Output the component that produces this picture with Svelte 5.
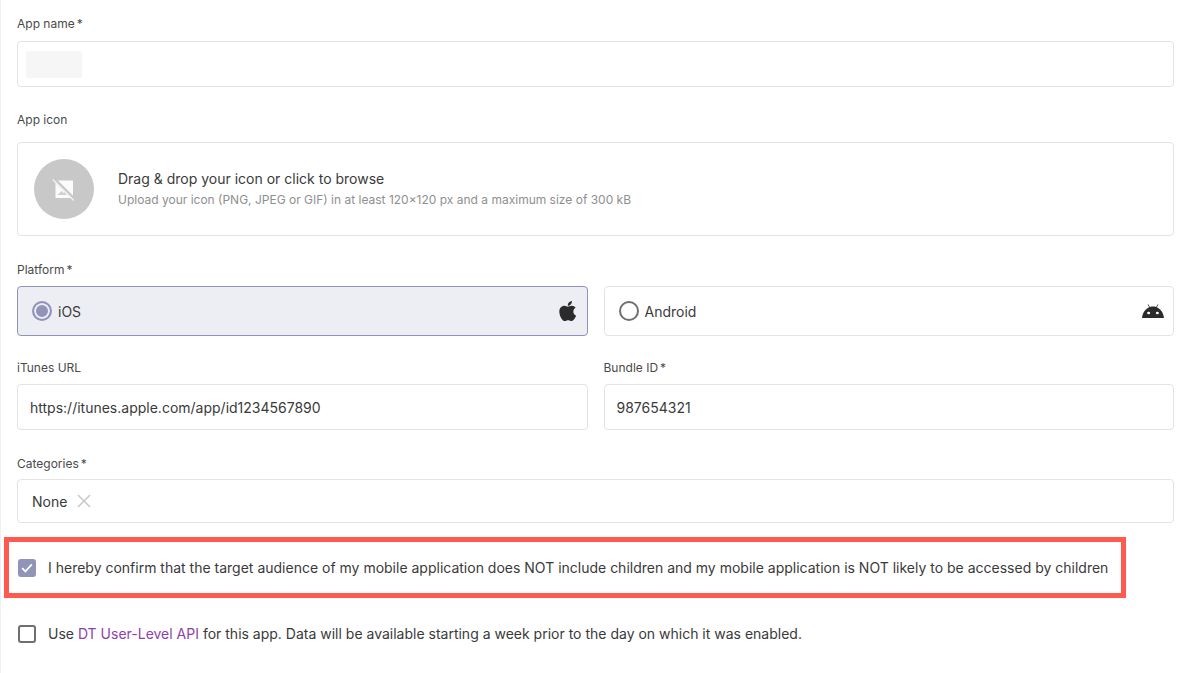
<script>
  let appName = '';
  let itunesUrl = 'https://itunes.apple.com/app/id1234567890';
  let bundleId = '987654321';
</script>

<div class="page">
  <div class="field name-field">
    <label for="app-name">App name<span class="req">*</span></label>
    <div class="input masked">
      <span class="blur"></span>
      <input id="app-name" bind:value={appName} />
    </div>
  </div>

  <div class="field icon-field">
    <span class="label">App icon</span>
    <div class="dropzone">
      <div class="avatar">
        <svg width="24" height="24" viewBox="0 0 24 24">
          <path d="M3.5 3.5h17.5v17.5H3.5z" fill="#fff" opacity="0.92" />
          <path d="M5.5 18l4-4 2 2 1-1 2 3z" fill="#cfcfcf" />
          <path d="M1.5 1.5l21 21" stroke="#c8c8c8" stroke-width="3.2" />
          <path d="M0.8 2.5l21 21" stroke="#f4f4f4" stroke-width="1.2" />
        </svg>
      </div>
      <div class="drop-text">
        <div class="drop-title">Drag &amp; drop your icon or click to browse</div>
        <div class="drop-hint">Upload your icon (PNG, JPEG or GIF) in at least 120×120 px and a maximum size of 300 kB</div>
      </div>
    </div>
  </div>

  <div class="field platform-field">
    <span class="label">Platform<span class="req">*</span></span>
    <div class="two">
      <div class="radio-card selected">
        <span class="radio on"></span>
        <span>iOS</span>
        <svg class="platform-icon" width="17" height="20" viewBox="4 32 366 448">
          <path fill="#2b2b2b" d="M318.7 268.7c-.2-36.7 16.4-64.4 50-84.8-18.8-26.9-47.2-41.7-84.7-44.6-35.5-2.8-74.3 20.7-88.5 20.7-15 0-49.4-19.7-76.4-19.7C63.3 141.2 4 184.8 4 273.5q0 39.3 14.4 81.2c12.8 36.7 59 126.7 107.2 125.2 25.2-.6 43-17.9 75.8-17.9 31.8 0 48.3 17.9 76.4 17.9 48.6-.7 90.4-82.5 102.6-119.3-65.2-30.7-61.7-90-61.7-91.9zm-56.6-164.2c27.3-32.4 24.8-61.9 24-72.5-24.1 1.4-52 16.4-67.9 34.9-17.5 19.8-27.8 44.3-25.6 71.9 26.1 2 49.9-11.4 69.5-34.3z" />
        </svg>
      </div>
      <div class="radio-card android">
        <span class="radio"></span>
        <span>Android</span>
        <svg class="platform-icon" width="22" height="14" viewBox="0 0 22 14">
          <path fill="#2b2b2b" d="M0 14C.5 8.8 3.4 4.8 7.2 3.2L5.6.6 6.2.2 7.9 2.9C9.1 2.5 10.1 2.4 11 2.4s1.9.1 3.1.5L15.8.2l.6.4-1.6 2.6C18.6 4.8 21.5 8.8 22 14z" />
          <ellipse cx="6.6" cy="9" rx="1.5" ry="1.2" fill="#fff" />
          <ellipse cx="15.4" cy="9" rx="1.5" ry="1.2" fill="#fff" />
        </svg>
      </div>
    </div>
  </div>

  <div class="two urls">
    <div class="field">
      <label for="itunes">iTunes URL</label>
      <div class="input"><input id="itunes" bind:value={itunesUrl} /></div>
    </div>
    <div class="field">
      <label for="bundle">Bundle ID<span class="req">*</span></label>
      <div class="input"><input id="bundle" bind:value={bundleId} /></div>
    </div>
  </div>

  <div class="field categories">
    <span class="label">Categories<span class="req">*</span></span>
    <div class="tags">
      <span>None</span>
      <svg width="14" height="14" viewBox="0 0 14 14">
        <path d="M1 1l12 12M13 1L1 13" stroke="#c9c9c9" stroke-width="1.6" fill="none" />
      </svg>
    </div>
  </div>

  <div class="check-row confirm">
    <span class="box checked">
      <svg width="12" height="10" viewBox="0 0 12 10">
        <path d="M1.2 5.2l3.2 3.2 6.4-7" stroke="#fff" stroke-width="1.8" fill="none" />
      </svg>
    </span>
    <span>I hereby confirm that the target audience of my mobile application does NOT include children and my mobile application is NOT likely to be accessed by children</span>
    <div class="highlight"></div>
  </div>

  <div class="check-row api">
    <span class="box"></span>
    <span>Use <a href="#api">DT User-Level API</a> for this app. Data will be available starting a week prior to the day on which it was enabled.</span>
  </div>
</div>

<style>
  :global(body) {
    background: #fff;
  }

  .page {
    box-sizing: border-box;
    width: 1184px;
    height: 673px;
    padding: 16px 10px 0 16px;
    border-left: 1px solid #f0f0f0;
    overflow: hidden;
    font-family: Inter, "Liberation Sans", sans-serif;
    font-size: 14px;
    color: #3a3a3a;
    position: relative;
  }

  .field {
    display: flex;
    flex-direction: column;
  }

  label, .label {
    font-size: 12px;
    line-height: 15px;
    color: #4a4a4a;
    margin-bottom: 10px;
  }

  .req {
    margin-left: 2px;
  }

  .input, .dropzone, .tags, .radio-card {
    box-sizing: border-box;
    border: 1px solid #e3e3e3;
    border-radius: 4px;
    background: #fff;
  }

  .input {
    height: 46px;
    display: flex;
    align-items: center;
    padding: 0 12px;
  }

  .input input {
    flex: 1;
    border: none;
    outline: none;
    padding: 0;
    font: inherit;
    color: inherit;
    background: transparent;
    min-width: 0;
  }

  .masked {
    position: relative;
  }

  .blur {
    position: absolute;
    left: 8px;
    top: 9px;
    width: 56px;
    height: 27px;
    background: #f6f6f6;
    border-radius: 2px;
  }

  .icon-field {
    margin-top: 25px;
  }

  .icon-field .label {
    margin-bottom: 15px;
  }

  .dropzone {
    height: 94px;
    display: flex;
    align-items: center;
    padding: 0 16px;
    gap: 24px;
  }

  .avatar {
    width: 60px;
    height: 60px;
    border-radius: 50%;
    background: #c8c8c8;
    display: flex;
    align-items: center;
    justify-content: center;
  }

  .drop-title {
    font-size: 14px;
    line-height: 18px;
  }

  .drop-hint {
    font-size: 12px;
    line-height: 16px;
    margin-top: 4px;
    color: #8f8f8f;
  }

  .platform-field {
    margin-top: 26px;
  }

  .platform-field .label {
    margin-bottom: 9px;
  }

  .two {
    display: grid;
    grid-template-columns: 1fr 1fr;
    gap: 16px;
  }

  .radio-card {
    height: 50px;
    display: flex;
    align-items: center;
    gap: 6px;
    padding: 0 11px 0 14px;
  }

  .radio-card.android {
    padding-right: 9px;
  }

  .radio-card.selected {
    background: #edeef4;
    border-color: #8e91b8;
  }

  .radio {
    box-sizing: border-box;
    width: 20px;
    height: 20px;
    border-radius: 50%;
    border: 2px solid #6f6f6f;
    background: #fff;
  }

  .radio.on {
    border-color: #9194b8;
    background: #9194b8;
    box-shadow: inset 0 0 0 2px #edeef4;
  }

  .platform-icon {
    margin-left: auto;
  }

  .urls {
    margin-top: 24px;
  }

  .urls label {
    margin-bottom: 9px;
  }

  .categories {
    margin-top: 26px;
  }

  .categories .label {
    margin-bottom: 8px;
  }

  .tags {
    height: 44px;
    display: flex;
    align-items: center;
    gap: 10px;
    padding: 0 14px;
  }

  .check-row {
    display: flex;
    align-items: center;
    gap: 12px;
    line-height: 20px;
    font-size: 14px;
    padding-left: 1px;
  }

  .confirm {
    margin-top: 35px;
    position: relative;
  }

  .api {
    margin-top: 46px;
  }

  .box {
    box-sizing: border-box;
    width: 18px;
    height: 18px;
    flex: none;
    border: 2px solid #6f6f6f;
    border-radius: 3px;
    background: #fff;
    display: flex;
    align-items: center;
    justify-content: center;
  }

  .box.checked {
    border-color: #9194b8;
    background: #9194b8;
  }

  a {
    color: #8e3fa8;
    text-decoration: none;
  }

  .highlight {
    position: absolute;
    left: -13px;
    top: -21px;
    width: 1122px;
    height: 61px;
    box-sizing: border-box;
    border: 5px solid #ff5a50;
    pointer-events: none;
  }
</style>
